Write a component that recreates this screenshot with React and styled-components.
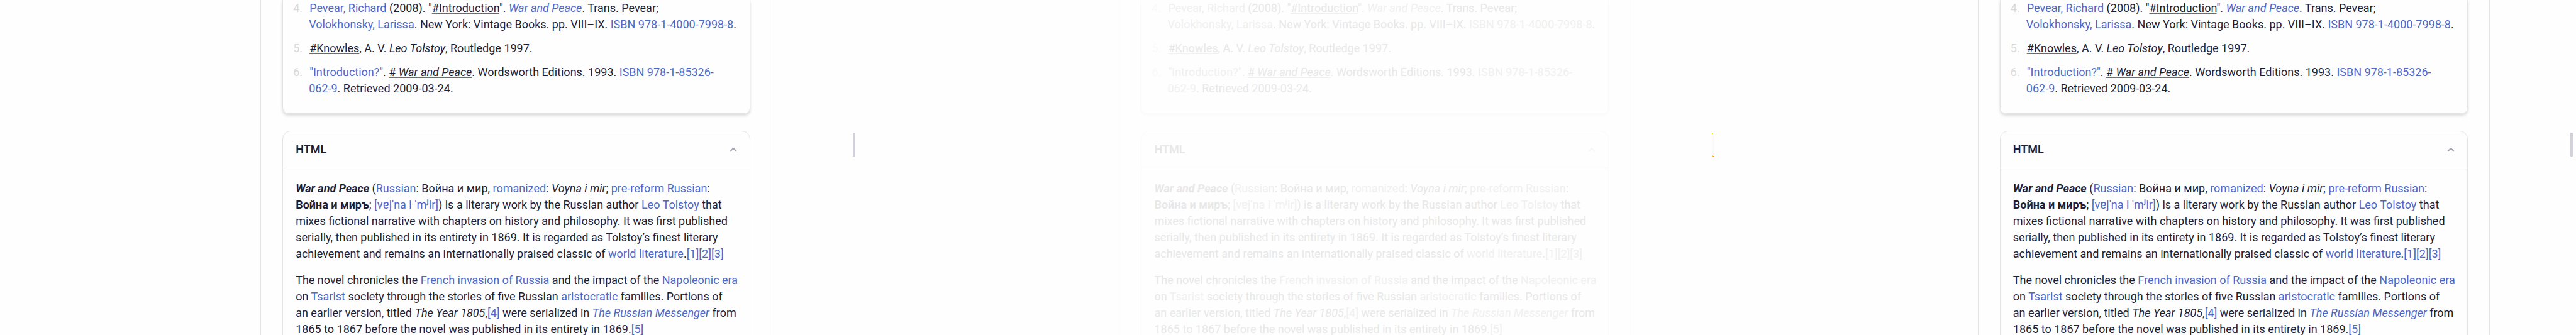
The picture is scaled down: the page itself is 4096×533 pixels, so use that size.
import React from "react";
import styled, { createGlobalStyle, ThemeProvider } from "styled-components";

const GlobalStyle = createGlobalStyle`
  * { box-sizing: border-box; }
  body { margin: 0; background: #fefefe; }
`;

const normalTheme = {
  text: "#1c1f3a",
  link: "#4c68c8",
  marker: "#d9d9d9",
  line: "#e4e4e4",
  rail: "#e4e4e4",
  chevron: "#a5a5b2",
  thumb: "#d0d1d9",
  thumbEdge: "#d0d1d9",
  thumbCorner: "#d0d1d9",
  shadow: "rgba(0, 0, 0, 0.14)",
};

const fadedTheme = {
  text: "#e8e8e8",
  link: "#f0f0f0",
  marker: "#f9f9f9",
  line: "#fafafa",
  rail: "#fbfbfb",
  chevron: "#f7f7f7",
  thumb: "#fafafa",
  thumbEdge: "#ff9a00",
  thumbCorner: "#ffec00",
  shadow: "rgba(0, 0, 0, 0.02)",
};

const Page = styled.div`
  display: flex;
  height: 100vh;
  overflow: hidden;
  font-family: Roboto, Inter, "Noto Sans", sans-serif;
  font-size: 18px;
  line-height: 26px;
`;

const Pane = styled.section`
  flex: 1 1 0;
  min-width: 0;
  position: relative;
  display: flex;
  justify-content: center;
  padding-left: 277px;
  overflow: hidden;
  color: ${(p) => p.theme.text};
`;

const Column = styled.main`
  flex: 0 1 814px;
  min-width: 0;
  display: flex;
  flex-direction: column;
  gap: 27px;
  padding: 0 34px;
  border: solid ${(p) => p.theme.rail};
  border-width: 0 1px;
`;

const NotesCard = styled.article`
  padding: 0 16px 26px;
  border: 1px solid ${(p) => p.theme.line};
  border-top: 0;
  border-radius: 0 0 9px 9px;
  box-shadow: 0 3px 4px ${(p) => p.theme.shadow};
`;

const NoteList = styled.ol`
  display: flex;
  flex-direction: column;
  gap: 12px;
  margin: 0;
  padding: 0;
  list-style: none;
`;

const Note = styled.li`
  display: flex;
  white-space: nowrap;
`;

const NoteNumber = styled.span`
  flex: 0 0 25px;
  color: ${(p) => p.theme.marker};
`;

const NoteText = styled.div`
  text-indent: 1px;
`;

const HtmlCard = styled.article`
  border: 1px solid ${(p) => p.theme.line};
  border-radius: 13px 13px 0 0;
  flex: 1 0 auto;
`;

const CardHeader = styled.header`
  display: flex;
  align-items: center;
  justify-content: space-between;
  height: 59px;
  padding: 0 20px;
  border-bottom: 1px solid ${(p) => p.theme.line};
`;

const CardTitle = styled.h2`
  margin: 0;
  font-size: 18px;
  font-weight: 600;
`;

const CollapseButton = styled.button`
  display: flex;
  padding: 0;
  border: 0;
  background: none;
  color: ${(p) => p.theme.chevron};
`;

const CardBody = styled.div`
  display: flex;
  flex-direction: column;
  gap: 16px;
  padding: 19px 20px;
`;

const Paragraph = styled.p`
  margin: 0;
  white-space: nowrap;
`;

const Link = styled.a`
  color: ${(p) => p.theme.link};
  text-decoration: none;
`;

const TagLink = styled.a`
  color: inherit;
  text-decoration: underline 1px ${(p) => p.theme.link};
  text-underline-offset: 2px;
  text-decoration-skip-ink: none;
`;

const ScrollThumb = styled.div`
  position: absolute;
  top: 211px;
  right: 5px;
  width: 4px;
  height: 38px;
  border: solid ${(p) => p.theme.thumbEdge};
  border-width: 1px 0;
  border-radius: 1px;
  background-color: ${(p) => p.theme.thumb};
  background-image: ${(p) => Array(4).fill(`linear-gradient(${p.theme.thumbCorner}, ${p.theme.thumbCorner})`).join(", ")};
  background-size: 1px 1px;
  background-position: left top, right top, left bottom, right bottom;
  background-repeat: no-repeat;
`;

function Chevron() {
  return (
    <svg width="12" height="8" viewBox="0 0 12 8" fill="none" stroke="currentColor" strokeWidth="2" strokeLinecap="round" strokeLinejoin="round" aria-hidden="true">
      <path d="M1.5 6.3L6 2l4.500 4.300" />
    </svg>
  );
}

function L({ children }) {
  return <Link href="#">{children}</Link>;
}

function Notes() {
  return (
    <NotesCard>
      <NoteList start={4}>
        <Note>
          <NoteNumber>4.</NoteNumber>
          <NoteText>
            <L>Pevear, Richard</L> (2008). "<TagLink href="#">#Introduction</TagLink>". <L><i>War and Peace</i></L>. Trans. Pevear;
            <br />
            <L>Volokhonsky, Larissa</L>. New York: Vintage Books. pp. VIII–IX. <L>ISBN 978-1-4000-7998-8</L>.
          </NoteText>
        </Note>
        <Note>
          <NoteNumber>5.</NoteNumber>
          <NoteText>
            <TagLink href="#">#Knowles</TagLink>, A. V. <i>Leo Tolstoy</i>, Routledge 1997.
          </NoteText>
        </Note>
        <Note>
          <NoteNumber>6.</NoteNumber>
          <NoteText>
            <L>"Introduction?"</L>. <TagLink href="#"># <i>War and Peace</i></TagLink>. Wordsworth Editions. 1993. <L>ISBN 978-1-85326-</L>
            <br />
            <L>062-9</L>. Retrieved 2009-03-24.
          </NoteText>
        </Note>
      </NoteList>
    </NotesCard>
  );
}

function HtmlSection() {
  return (
    <HtmlCard>
      <CardHeader>
        <CardTitle>HTML</CardTitle>
        <CollapseButton type="button" aria-label="Collapse HTML">
          <Chevron />
        </CollapseButton>
      </CardHeader>
      <CardBody>
        <Paragraph>
          <b><i>War and Peace</i></b> (<L>Russian</L>: Война и мир, <L>romanized</L>: <i>Voyna i mir</i>; <L>pre-reform Russian</L>:
          <br />
          <b>Война и миръ</b>; <L>[vɐjˈna i ˈmʲir]</L>) is a literary work by the Russian author <L>Leo Tolstoy</L> that
          <br />
          mixes fictional narrative with chapters on history and philosophy. It was first published
          <br />
          serially, then published in its entirety in 1869. It is regarded as Tolstoy’s finest literary
          <br />
          achievement and remains an internationally praised classic of <L>world literature</L>.<L>[1]</L><L>[2]</L><L>[3]</L>
        </Paragraph>
        <Paragraph>
          The novel chronicles the <L>French invasion of Russia</L> and the impact of the <L>Napoleonic era</L>
          <br />
          on <L>Tsarist</L> society through the stories of five Russian <L>aristocratic</L> families. Portions of
          <br />
          an earlier version, titled <i>The Year 1805</i>,<L>[4]</L> were serialized in <L><i>The Russian Messenger</i></L> from
          <br />
          1865 to 1867 before the novel was published in its entirety in 1869.<L>[5]</L>
        </Paragraph>
      </CardBody>
    </HtmlCard>
  );
}

function DocumentPane({ theme }) {
  return (
    <ThemeProvider theme={theme}>
      <Pane>
        <Column>
          <Notes />
          <HtmlSection />
        </Column>
        <ScrollThumb />
      </Pane>
    </ThemeProvider>
  );
}

export default function App() {
  return (
    <>
      <GlobalStyle />
      <Page>
        <DocumentPane theme={normalTheme} />
        <DocumentPane theme={fadedTheme} />
        <DocumentPane theme={normalTheme} />
      </Page>
    </>
  );
}
